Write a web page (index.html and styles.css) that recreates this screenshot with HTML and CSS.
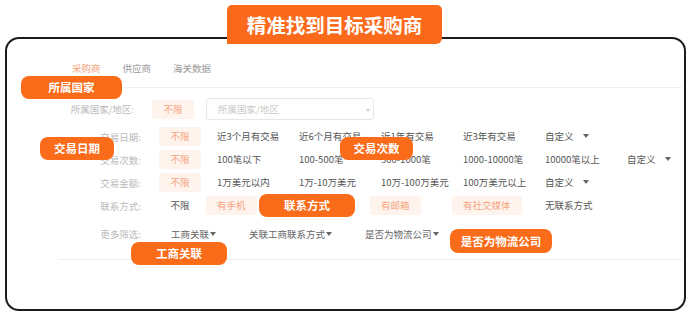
FILE: index.html
```html
<!DOCTYPE html>
<html>
  <head>
    <title>精准找到目标采购商</title>
    <link rel="stylesheet" href="styles.css">
  </head>

  <body>
    <div class="title">精准找到目标采购商</div>

    <div class="frame">
      <div class="tabs">
        <span class="tab active">采购商</span>
        <span class="tab">供应商</span>
        <span class="tab">海关数据</span>
      </div>

      <div class="filters">
        <div class="row row-country">
          <span class="label">所属国家/地区:</span>
          <span class="chip on any">不限</span>
          <div class="select">所属国家/地区<span class="caret"></span></div>
        </div>

        <div class="row">
          <span class="label">交易日期:</span>
          <span class="chip on any">不限</span>
          <div class="opts">
            <span class="chip">近3个月有交易</span>
            <span class="chip">近6个月有交易</span>
            <span class="chip">近1年有交易</span>
            <span class="chip">近3年有交易</span>
            <span class="chip dd">自定义</span>
          </div>
        </div>

        <div class="row">
          <span class="label">交易次数:</span>
          <span class="chip on any">不限</span>
          <div class="opts">
            <span class="chip">100笔以下</span>
            <span class="chip">100-500笔</span>
            <span class="chip">500-1000笔</span>
            <span class="chip">1000-10000笔</span>
            <span class="chip">10000笔以上</span>
            <span class="chip dd">自定义</span>
          </div>
        </div>

        <div class="row">
          <span class="label">交易金额:</span>
          <span class="chip on any">不限</span>
          <div class="opts">
            <span class="chip">1万美元以内</span>
            <span class="chip">1万-10万美元</span>
            <span class="chip">10万-100万美元</span>
            <span class="chip">100万美元以上</span>
            <span class="chip dd">自定义</span>
          </div>
        </div>

        <div class="row">
          <span class="label">联系方式:</span>
          <span class="chip any">不限</span>
          <div class="opts">
            <span class="chip on">有手机</span>
            <span class="chip empty"></span>
            <span class="chip on">有邮箱</span>
            <span class="chip on">有社交媒体</span>
            <span class="chip">无联系方式</span>
          </div>
        </div>

        <div class="row row-more">
          <span class="label">更多筛选:</span>
          <div class="more">
            <span class="drop">工商关联</span>
            <span class="drop">关联工商联系方式</span>
            <span class="drop">是否为物流公司</span>
          </div>
        </div>
      </div>
    </div>

    <div class="badge b-country">所属国家</div>
    <div class="badge b-date">交易日期</div>
    <div class="badge b-count">交易次数</div>
    <div class="badge b-contact">联系方式</div>
    <div class="badge b-logistics">是否为物流公司</div>
    <div class="badge b-business">工商关联</div>
  </body>
</html>
```

FILE: styles.css
```css
body {
  margin: 0;
  background: #ffffff;
  font-family: "Noto Sans CJK SC", "Noto Sans", sans-serif;
  font-size: 9.5px;
  color: #555555;
  position: relative;
  height: 315px;
  overflow: hidden;
}

.title {
  position: absolute;
  left: 227px;
  top: 5px;
  width: 215px;
  height: 39px;
  line-height: 39px;
  text-align: center;
  background-color: #fa6a1a;
  color: #ffffff;
  font-size: 19.5px;
  font-weight: bold;
  border-radius: 5px 5px 6px 0;
  z-index: 2;
}

.frame {
  margin: 37px 5px 0 5px;
  height: 274px;
  box-sizing: border-box;
  border: 2px solid #1c1c1c;
  border-radius: 14px;
}

.tabs {
  display: flex;
  gap: 22px;
  margin: 22px 2px 0 51px;
  padding: 0 0 12px 14px;
  line-height: 14px;
  border-bottom: 1px solid #f0f0f0;
}

.tab {
  color: #9a9a9a;
}

.tab.active {
  color: #f5a47e;
}

.filters {
  margin: 0 2px 0 51px;
  padding-top: 10px;
  padding-bottom: 14px;
  border-bottom: 1px solid #f0f0f0;
}

.row {
  display: flex;
  align-items: center;
  height: 23px;
}

.row-country {
  height: 22px;
  margin-bottom: 5px;
}

.label {
  width: 83px;
  margin-right: 18px;
  text-align: right;
  color: #bababa;
  flex-shrink: 0;
}

.row-country .label {
  width: 76px;
}

.chip {
  display: inline-block;
  height: 19px;
  line-height: 19px;
  padding: 0 11px;
  border-radius: 3px;
  white-space: nowrap;
  color: #555555;
}

.chip.on {
  background-color: #fff4ed;
  color: #f5a47e;
}

.chip.any {
  width: 42px;
  box-sizing: border-box;
  text-align: center;
  padding: 0;
  margin-right: 5px;
  flex-shrink: 0;
}

.row-country .chip.any {
  margin-right: 12px;
}

.opts {
  display: grid;
  grid-auto-flow: column;
  grid-auto-columns: 82px;
  justify-items: start;
  align-items: center;
}

.dd::after,
.drop::after {
  content: "";
  display: inline-block;
  vertical-align: middle;
  border-left: 3px solid transparent;
  border-right: 3px solid transparent;
  border-top: 4px solid #666666;
  margin-top: -2px;
}

.dd::after {
  margin-left: 9px;
}

.select {
  position: relative;
  width: 168px;
  height: 22px;
  line-height: 21px;
  box-sizing: border-box;
  padding-left: 11px;
  border: 1px solid #e6e6e6;
  border-radius: 3px;
  color: #c9c9c9;
}

.caret {
  position: absolute;
  right: 3px;
  top: 10px;
  border-left: 2.5px solid transparent;
  border-right: 2.5px solid transparent;
  border-top: 3px solid #cccccc;
}

.row-more {
  margin-top: 5px;
}

.more {
  display: flex;
  gap: 33px;
  margin-left: 12px;
  color: #666666;
}

.drop::after {
  margin-left: 1px;
}

.badge {
  position: absolute;
  height: 23px;
  line-height: 23px;
  text-align: center;
  background-color: #fa6b1a;
  color: #ffffff;
  font-size: 11.5px;
  font-weight: bold;
  border-radius: 8px;
  z-index: 3;
}

.b-country {
  left: 21px;
  top: 76px;
  width: 101px;
}

.b-date {
  left: 40px;
  top: 137px;
  width: 74px;
}

.b-count {
  left: 340px;
  top: 137px;
  width: 73px;
}

.b-contact {
  left: 259px;
  top: 194px;
  width: 96px;
}

.b-logistics {
  left: 450px;
  top: 229px;
  width: 102px;
  height: 24px;
  line-height: 24px;
}

.b-business {
  left: 131px;
  top: 242px;
  width: 96px;
}
```
